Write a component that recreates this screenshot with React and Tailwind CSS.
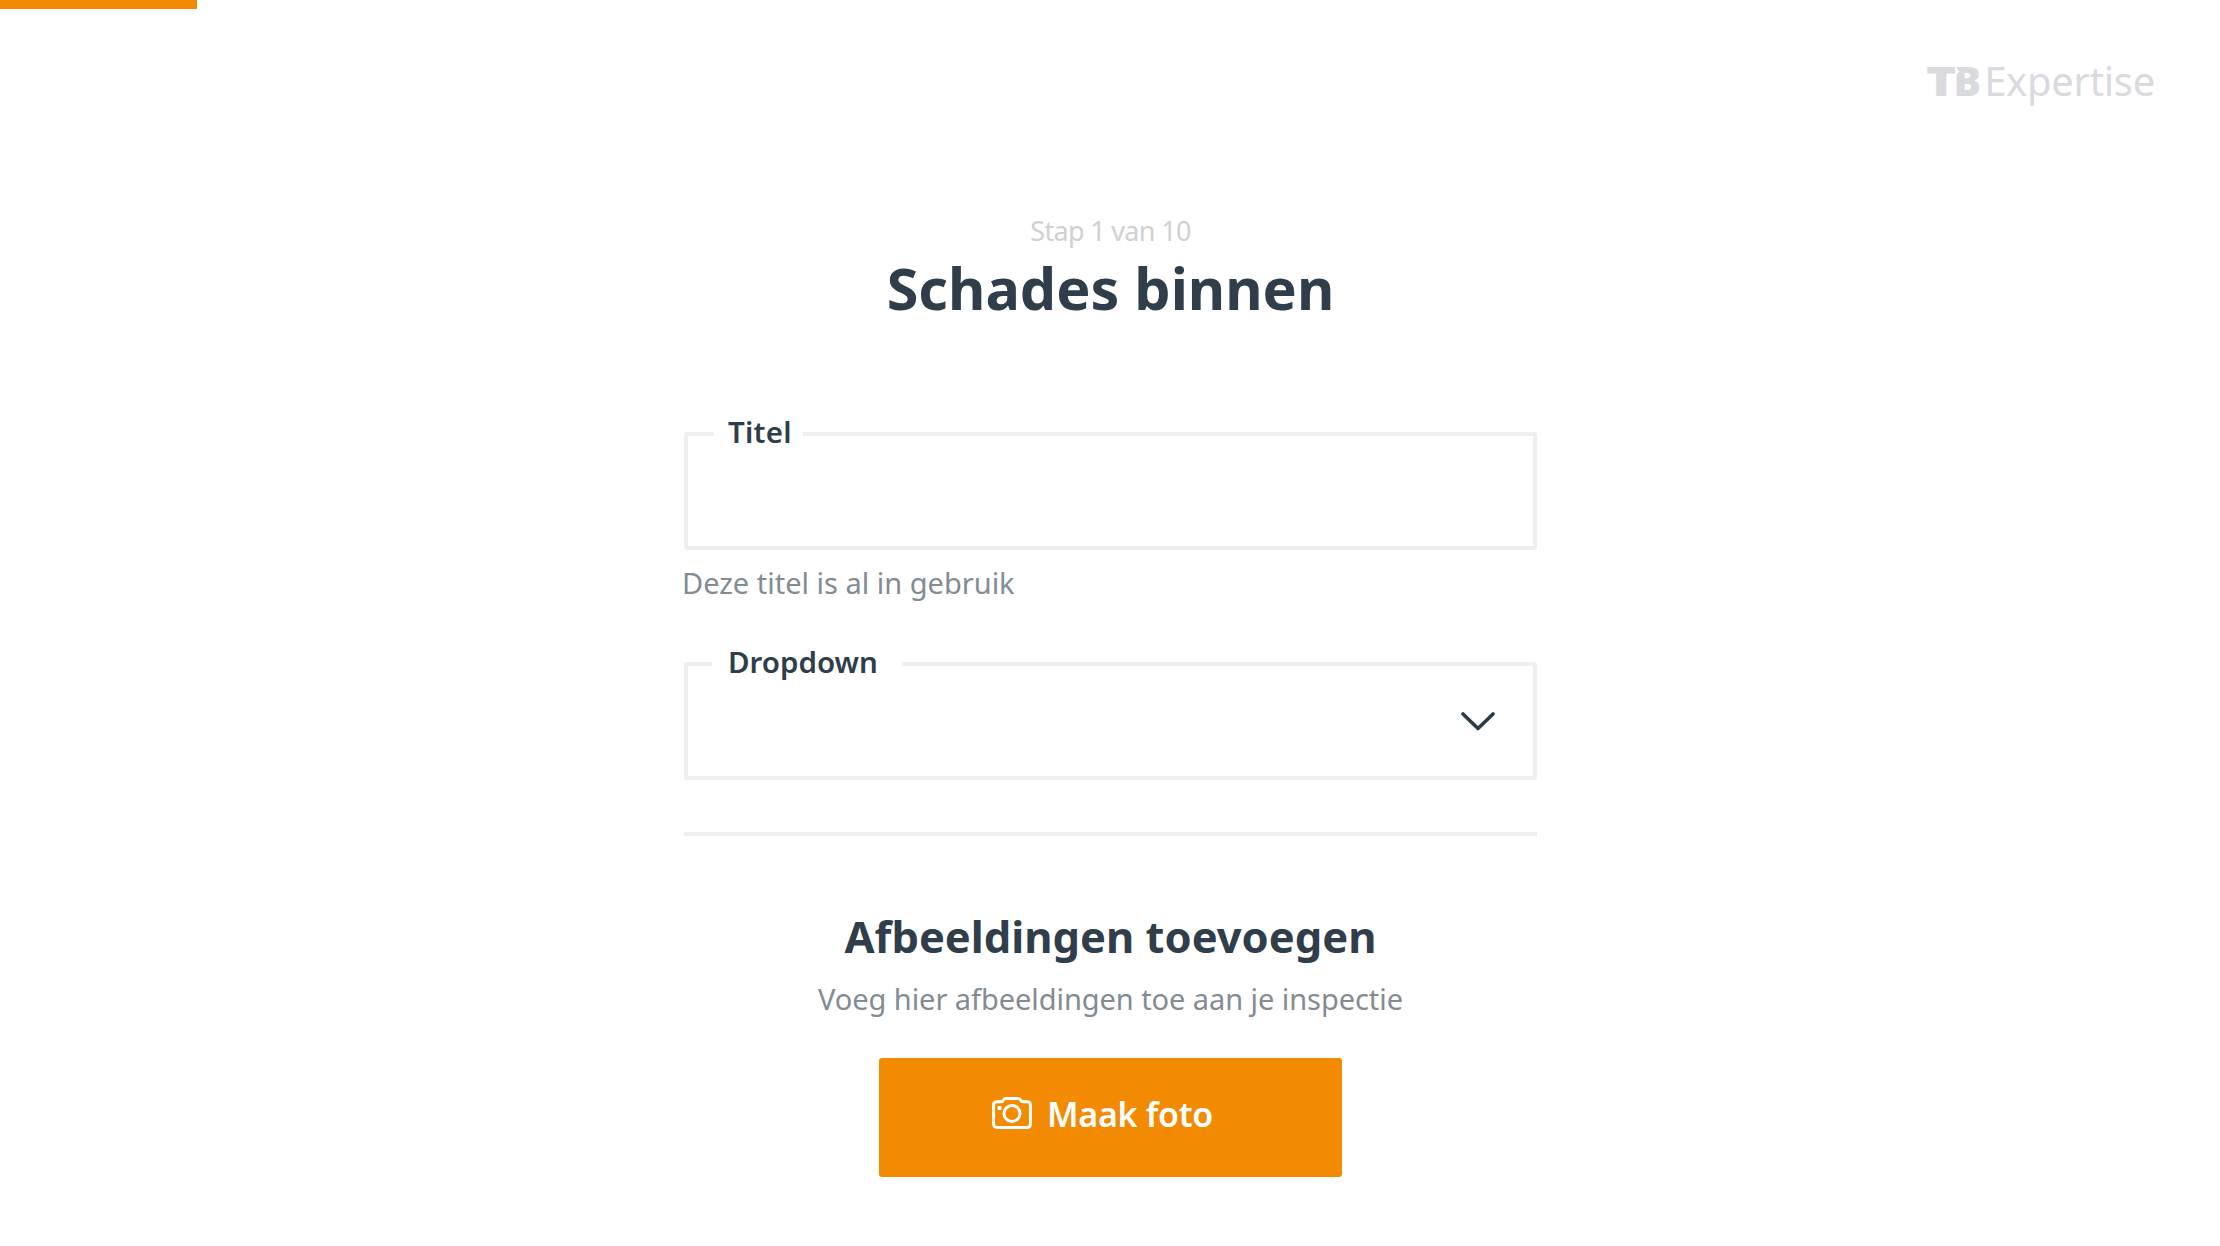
import React from "react";

function Logo() {
  return (
    <div className="flex items-start text-[#d9dadf]">
      <div className="relative -mt-px flex text-[41px] font-black leading-[48px]">
        <span className="inline-block w-[27px] origin-left scale-x-[1.25]">T</span>
        <span className="inline-block">B</span>
        <svg className="absolute left-[26px] top-[8px]" width="14" height="14" viewBox="0 0 14 14">
          <path d="M3 2 L7.5 7.5 L3 12 Z" fill="#fff" />
        </svg>
      </div>
      <span className="ml-[3px] text-[40px] leading-[48px] tracking-[-0.3px]">Expertise</span>
    </div>
  );
}

function Chevron() {
  return (
    <svg className="relative top-[1px]" width="34" height="20" viewBox="0 0 34 20" fill="none" stroke="#2b3b47" strokeWidth="3.6" strokeLinecap="round" strokeLinejoin="round">
      <path d="M2 2 L17 16.5 L32 2" />
    </svg>
  );
}

function Camera() {
  return (
    <svg width="40" height="32" viewBox="0 0 40 32" fill="none" stroke="#fff" strokeWidth="3" strokeLinejoin="round">
      <path d="M5 4.8 H9.5 C11.5 4.8 11 1.6 13.5 1.6 H26.5 C29 1.6 28.5 4.8 30.5 4.8 H35 Q38.4 4.8 38.4 8.2 V27 Q38.4 30.4 35 30.4 H5 Q1.6 30.4 1.6 27 V8.2 Q1.6 4.8 5 4.8 Z" />
      <circle cx="20" cy="16.5" r="8" />
      <rect x="5.5" y="9" width="4" height="4" rx="1" fill="#fff" stroke="none" />
    </svg>
  );
}

function Field({ label, labelClass, children }) {
  return (
    <div className="relative flex h-[118px] items-center justify-end rounded-[3px] border-4 border-[#eeefef] pr-[38px]">
      <label className={"absolute top-[-24px] h-10 bg-white text-[29.5px] font-semibold leading-10 text-[#2f3e4a] " + labelClass}>
        {label}
      </label>
      {children}
    </div>
  );
}

export default function App() {
  return (
    <div className="relative h-[1246px] w-[2220px] overflow-hidden bg-white font-['Noto_Sans',sans-serif]">
      <div className="h-[9px] w-[197px] bg-[#f28a02]" />
      <header className="flex h-[204px] justify-end pr-[65px] pt-[48px]">
        <Logo />
      </header>
      <main className="ml-[684px] flex w-[853px] flex-col">
        <p className="text-center text-[27px] leading-9 tracking-[-0.69px] text-[#d0d0d0]">Stap 1 van 10</p>
        <h1 className="mt-[7px] text-center text-[57.5px] font-bold leading-[64px] text-[#2f3e4a]">Schades binnen</h1>
        <div className="mt-[112px]">
          <Field label="Titel" labelClass="left-[26px] w-[89px] pl-[14px] tracking-[0.2px]" />
        </div>
        <p className="-ml-[2px] mt-[13px] text-[29px] leading-10 text-[#838b93]">Deze titel is al in gebruik</p>
        <div className="mt-[59px]">
          <Field label="Dropdown" labelClass="left-[24px] w-[190px] pl-[16px]">
            <Chevron />
          </Field>
        </div>
        <hr className="mt-[52px] h-1 border-0 bg-[#eeefef]" />
        <h2 className="mt-[72px] text-center text-[43.5px] font-bold leading-[56px] text-[#2f3e4a]">Afbeeldingen toevoegen</h2>
        <p className="mt-[15px] text-center text-[29px] leading-10 tracking-[-0.06px] text-[#838b93]">Voeg hier afbeeldingen toe aan je inspectie</p>
        <button className="ml-[195px] mt-[39px] flex h-[119px] w-[463px] items-start rounded-[3px] bg-[#f28a02] pl-[113px] pt-8 text-[34px] font-semibold leading-[48px] text-white">
          <span className="mt-[7px]"><Camera /></span>
          <span className="ml-[15px] tracking-[-0.3px]">Maak foto</span>
        </button>
      </main>
    </div>
  );
}
